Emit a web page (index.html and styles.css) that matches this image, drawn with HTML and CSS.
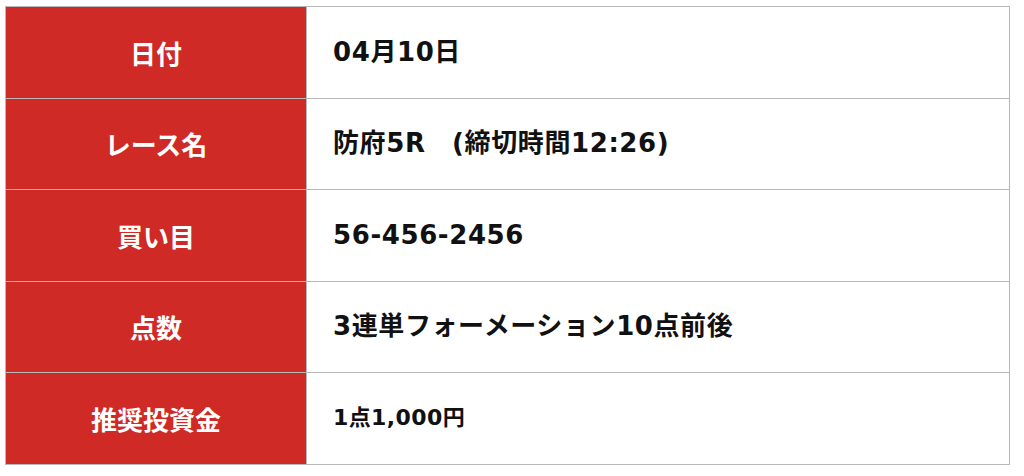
FILE: index.html
```html
<!DOCTYPE html>
<html lang="ja">
<head>
<meta charset="utf-8">
<link rel="stylesheet" href="styles.css">
</head>
<body>
<table class="info">
  <tr><th class="label">日付</th><td class="value">04月10日</td></tr>
  <tr><th class="label">レース名</th><td class="value">防府5R　(締切時間12:26)</td></tr>
  <tr><th class="label">買い目</th><td class="value">56-456-2456</td></tr>
  <tr><th class="label">点数</th><td class="value">3連単フォーメーション10点前後</td></tr>
  <tr><th class="label">推奨投資金</th><td class="value small">1点1,000円</td></tr>
</table>
</body>
</html>
```
FILE: styles.css
```css
html, body {
  margin: 0;
  padding: 0;
  background: #ffffff;
}
body {
  padding: 6px 5px 0 5px;
  font-family: "Noto Sans CJK JP", "Noto Sans", sans-serif;
}
.info {
  width: 1005px;
  border-collapse: collapse;
  table-layout: fixed;
}
.info th, .info td {
  border: 1px solid #b8b8b8;
  height: 91.6px;
  box-sizing: border-box;
  padding: 0;
  vertical-align: middle;
}
.label {
  width: 301px;
  background: #cf2a25;
  color: #ffffff;
  font-size: 26px;
  font-weight: 700;
  text-align: center;
  line-height: 1.2;
}
.value {
  color: #111111;
  font-family: "DejaVu Sans", "Noto Sans CJK JP", sans-serif;
  font-size: 26px;
  font-weight: 700;
  text-align: left;
  padding-left: 26px !important;
  letter-spacing: 0.6px;
  line-height: 1.2;
}
.value.small {
  font-size: 22px;
  letter-spacing: 0.4px;
}
```
